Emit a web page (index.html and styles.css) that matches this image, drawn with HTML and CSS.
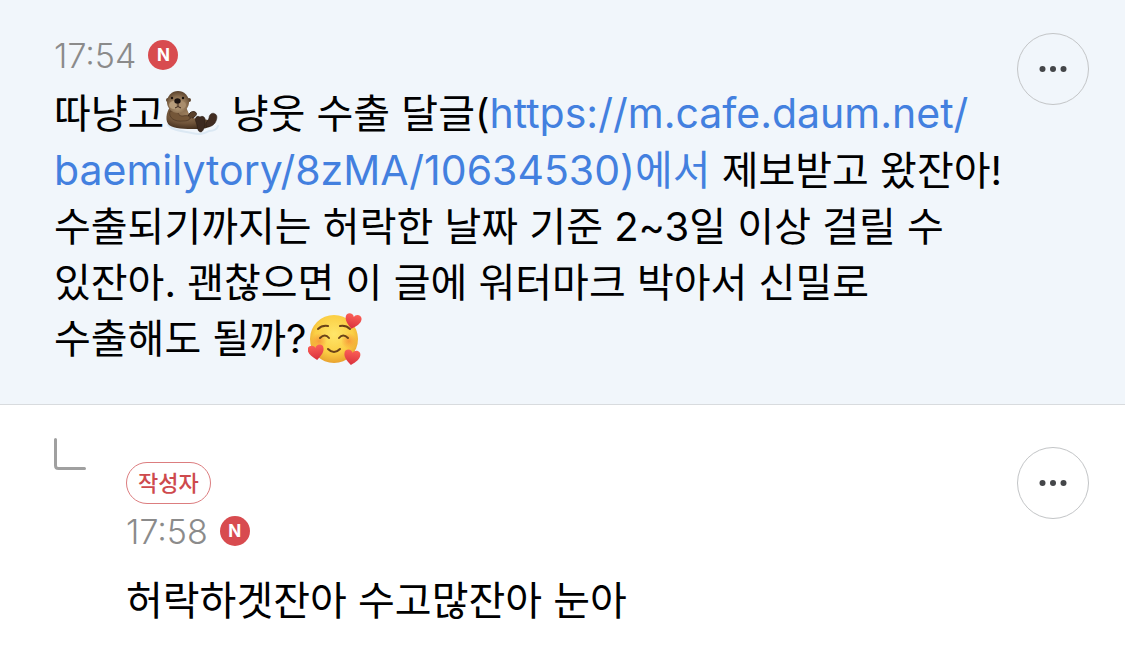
FILE: index.html
```
<!DOCTYPE html>
<html lang="ko">
<head>
  <meta charset="UTF-8" />
  <title>댓글</title>
  <meta name="viewport" content="width=device-width, initial-scale=1.0" />

  <link rel="stylesheet" href="styles.css">
</head>

<body>
  <main class="comments">
    <article class="comment comment-active">
      <div class="comment-body">
        <div class="meta">
          <time datetime="17:54">17:54</time>
          <span class="badge-new">N</span>
        </div>

        <p class="text">
          따냥고<svg class="emoji" viewBox="0 0 54 54" role="img" aria-label="수달">
            <defs>
              <radialGradient id="fur" cx="45%" cy="30%" r="75%">
                <stop offset="0" stop-color="#9a7d5c" />
                <stop offset="0.6" stop-color="#6f5339" />
                <stop offset="1" stop-color="#3f2b1b" />
              </radialGradient>
              <radialGradient id="head" cx="50%" cy="65%" r="65%">
                <stop offset="0" stop-color="#c3aa86" />
                <stop offset="0.6" stop-color="#8d7152" />
                <stop offset="1" stop-color="#58402a" />
              </radialGradient>
            </defs>
            <path d="M3 38c6 7 17 6 24 8 8 2 14 0 17-2 5 0 8-2 9-5" fill="none" stroke="#dbe8f3" stroke-width="2" stroke-linecap="round" />
            <path d="M5 20C1 26 0 34 4 38c5 4 16 4 27 4 7 0 14-1 15-4 1-4-4-6-10-6-6 0-10-1-12-5l-3-7z" fill="url(#fur)" />
            <path d="M23 33c-1-6 4-10 7-8 3 1 1 5-3 6" fill="#59412c" stroke="#36251a" stroke-width="1" />
            <path d="M5 24c-2 7 5 11 13 10 4 0 7-1 7-3s-3-3-7-2c-4 0-5-2-5-5z" fill="#745638" stroke="#463120" stroke-width="0.6" />
            <circle cx="3" cy="13" r="2" fill="#5b422c" />
            <circle cx="24" cy="13" r="2" fill="#5b422c" />
            <ellipse cx="13" cy="15" rx="11" ry="11" fill="url(#head)" />
            <ellipse cx="9" cy="18" rx="5" ry="4" fill="#b79d7b" />
            <ellipse cx="16" cy="18" rx="5" ry="4" fill="#a98d6c" />
            <ellipse cx="12.5" cy="14" rx="3.2" ry="2.8" fill="#1c1411" />
            <path d="M13 16v3M10 21q3-3 6 0" fill="none" stroke="#3a271b" stroke-width="1" />
            <circle cx="7" cy="11" r="1.2" fill="#18100c" />
            <circle cx="18" cy="11" r="1.2" fill="#18100c" />
            <path d="M31 35c-2-4 1-7 4-5 3-2 6 1 5 4 0 4-1 10-4 11-4 0-3-5-5-10z" fill="#3d2a1f" stroke="#251811" stroke-width="0.5" />
            <path d="M44 31c0-4 4-6 6-4 3 1 2 6 0 9s-7 5-9 3c-1-3 2-5 3-8z" fill="#422d21" stroke="#251811" stroke-width="0.5" />
          </svg> 냥웃 수출 달글(<a href="https://m.cafe.daum.net/baemilytory/8zMA/10634530">https://m.cafe.daum.net/<wbr>baemilytory/8zMA/10634530)에서</a> 제보받고 왔잔아!
          수출되기까지는 허락한 날짜 기준 2~3일 이상 걸릴 수
          있잔아. 괜찮으면 이 글에 워터마크 박아서 신밀로
          수출해도 될까?<svg class="emoji" viewBox="0 0 54 54" role="img" aria-label="하트에 둘러싸인 웃는 얼굴">
            <defs>
              <radialGradient id="skin" cx="50%" cy="40%" r="60%">
                <stop offset="0" stop-color="#ffe66a" />
                <stop offset="0.65" stop-color="#fbcf45" />
                <stop offset="1" stop-color="#e9a22e" />
              </radialGradient>
              <radialGradient id="blush">
                <stop offset="0" stop-color="#f58434" stop-opacity="0.7" />
                <stop offset="1" stop-color="#f58434" stop-opacity="0" />
              </radialGradient>
              <linearGradient id="love" x1="0" y1="0" x2="0" y2="1">
                <stop offset="0" stop-color="#fb6057" />
                <stop offset="1" stop-color="#d9303d" />
              </linearGradient>
              <path id="heart" d="M0 8C-5 4-8 1-8-3-8-8-1-8 0-4 1-8 8-8 8-3 8 1 5 4 0 8z" />
            </defs>
            <circle cx="26" cy="27" r="24" fill="url(#skin)" />
            <circle cx="11" cy="29" r="8" fill="url(#blush)" />
            <circle cx="41" cy="29" r="8" fill="url(#blush)" />
            <g fill="none" stroke="#6b4318" stroke-width="2" stroke-linecap="round">
              <path d="M10 17q4-4 10-3M32 14q6-1 10 3" />
              <path d="M12 26q5-5 9 0M31 26q4-5 9 0" />
              <path d="M20 37q6 6 12 0" />
            </g>
            <use href="#heart" fill="url(#love)" transform="translate(45 9) rotate(12)" />
            <use href="#heart" fill="url(#love)" transform="translate(8 40) rotate(-8)" />
            <use href="#heart" fill="url(#love)" transform="translate(44 45) rotate(8)" />
          </svg>
        </p>
      </div>

      <button type="button" class="more" aria-label="더보기">
        <svg viewBox="0 0 28 8" aria-hidden="true">
          <circle cx="3.5" cy="4" r="3" />
          <circle cx="14" cy="4" r="3" />
          <circle cx="24.5" cy="4" r="3" />
        </svg>
      </button>
    </article>

    <article class="comment comment-reply">
      <svg class="reply-mark" viewBox="0 0 32 32" aria-hidden="true">
        <path d="M1.5 1.5v26q0 3 3 3h26" />
      </svg>

      <div class="comment-body">
        <span class="badge-author">작성자</span>
        <div class="meta">
          <time datetime="17:58">17:58</time>
          <span class="badge-new">N</span>
        </div>

        <p class="text">허락하겟잔아 수고많잔아 눈아</p>
      </div>

      <button type="button" class="more" aria-label="더보기">
        <svg viewBox="0 0 28 8" aria-hidden="true">
          <circle cx="3.5" cy="4" r="3" />
          <circle cx="14" cy="4" r="3" />
          <circle cx="24.5" cy="4" r="3" />
        </svg>
      </button>
    </article>
  </main>
</body>
</html>
```
FILE: styles.css
```
body {
  font-family: Inter, "Noto Sans CJK KR", sans-serif;
  background: #fff;
  margin: 0;
  color: #000;
}

.comment {
  display: flex;
  align-items: flex-start;
  padding: 33px 36px 37px 54px;
}

.comment-active {
  background: #f1f6fb;
  border-bottom: 1px solid #d8dbde;
}

.comment-body {
  flex: 1;
  min-width: 0;
}

.meta {
  display: flex;
  align-items: center;
  gap: 12px;
  height: 44px;
  color: #8b8b8b;
  font-size: 34px;
  font-weight: 300;
}

.badge-new {
  width: 30px;
  height: 30px;
  border-radius: 50%;
  background: #d84b4f;
  color: #fff;
  font-size: 17px;
  font-weight: 700;
  line-height: 30px;
  text-align: center;
}

.text {
  margin: 8px 8px 0 0;
  font-size: 40px;
  line-height: 56px;
  word-break: keep-all;
}

.text a {
  color: #4380df;
  font-size: 41px;
  text-decoration: none;
}

.emoji {
  width: 54px;
  height: 54px;
  margin: -8px 1px;
  vertical-align: -5px;
}

.more {
  display: flex;
  align-items: center;
  justify-content: center;
  flex: none;
  width: 72px;
  height: 72px;
  padding: 0;
  border: 1px solid #c3c5c7;
  border-radius: 50%;
  background: transparent;
  cursor: pointer;
}

.more svg {
  width: 28px;
  height: 8px;
  fill: #444649;
}

.reply-mark {
  flex: none;
  width: 32px;
  height: 32px;
  margin-right: 40px;
  fill: none;
  stroke: #a0a0a0;
  stroke-width: 3;
  stroke-linecap: round;
}

.comment-reply .comment-body,
.comment-reply .more {
  margin-top: 9px;
}

.comment-reply .meta {
  margin-top: 5px;
}

.comment-reply .text {
  margin-top: 20px;
}

.badge-author {
  display: block;
  width: fit-content;
  margin-top: 15px;
  padding: 0 11px;
  border: 1px solid #dc7d7f;
  border-radius: 21px;
  color: #ce4a4d;
  font-size: 22px;
  font-weight: 500;
  line-height: 40px;
}
```
